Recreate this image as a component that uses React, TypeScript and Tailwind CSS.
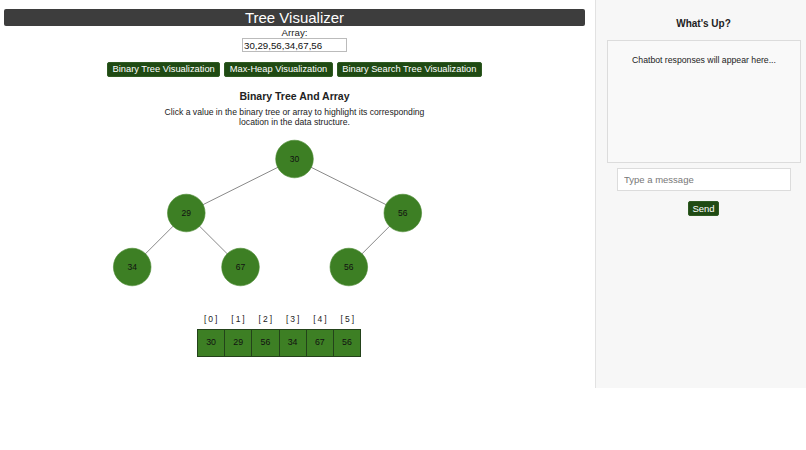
import React from "react";

const F = { fontFamily: '"Liberation Sans", Arial, Helvetica, sans-serif' };

type N = { x: number; y: number; v: string };

export default function App() {
  const arr = ["30", "29", "56", "34", "67", "56"];
  // coordinates relative to svg (svg starts at x=4, y=130)
  const nodes: N[] = [
    { x: 290.5, y: 28, v: "30" },
    { x: 182.3, y: 82, v: "29" },
    { x: 398.8, y: 82, v: "56" },
    { x: 128.2, y: 136, v: "34" },
    { x: 236.5, y: 136, v: "67" },
    { x: 344.8, y: 136, v: "56" },
  ];
  const edges: [number, number][] = [
    [0, 1],
    [0, 2],
    [1, 3],
    [1, 4],
    [2, 5],
  ];
  return (
    <div className="flex w-[806px] h-[450px] bg-white text-[#222]" style={F}>
      <div className="w-[595px] shrink-0 pl-[4px] pr-[10px]">
        <div className="mt-[9px] h-[17px] rounded-[2px] bg-[#3d3d3d] text-center text-[15px] leading-[17px] text-white">
          Tree Visualizer
        </div>
        <div className="mt-[1px] text-center text-[9.7px] leading-[11px]">Array:</div>
        <div className="flex justify-center">
          <input
            defaultValue="30,29,56,34,67,56"
            className="h-[14px] w-[105px] border border-[#bbb] bg-white px-[1px] text-[9.7px] leading-[12px] text-[#111] outline-none"
            style={F}
          />
        </div>
        <div className="mt-[10px] flex justify-center gap-[4px]">
          {["Binary Tree Visualization", "Max-Heap Visualization", "Binary Search Tree Visualization"].map((t) => (
            <button
              key={t}
              className="h-[15px] rounded-[2px] border border-[#2f5a22] bg-[#1f4a13] px-[4.5px] text-[9.3px] leading-[13px] text-white"
              style={F}
            >
              {t}
            </button>
          ))}
        </div>
        <div className="mt-[13px] text-center text-[10.5px] font-bold leading-[12px]">Binary Tree And Array</div>
        <div className="mt-[5px] text-center text-[8.65px] leading-[10px]">
          Click a value in the binary tree or array to highlight its corresponding
          <br />
          location in the data structure.
        </div>
        <svg width="581" height="160" className="mt-[4px] block">
          {edges.map(([a, b], i) => (
            <line
              key={i}
              x1={nodes[a].x}
              y1={nodes[a].y}
              x2={nodes[b].x}
              y2={nodes[b].y}
              stroke="#6b6b6b"
              strokeWidth="0.8"
            />
          ))}
          {nodes.map((n, i) => (
            <g key={i}>
              <circle cx={n.x} cy={n.y} r="18.8" fill="#3d7f24" stroke="#4a8a30" strokeWidth="0.6" />
              <text
                x={n.x}
                y={n.y + 3}
                textAnchor="middle"
                fontSize="8.5"
                fill="#111"
                style={F}
              >
                {n.v}
              </text>
            </g>
          ))}
        </svg>
        <div className="mt-[23px] flex pl-[193px]">
          <div className="flex w-[164px]">
            {arr.map((_, i) => (
              <div key={i} className="flex-1 pl-[2px] text-center text-[8.5px] leading-[10px] tracking-[2px]">
                [{i}]
              </div>
            ))}
          </div>
        </div>
        <div className="mt-[5px] flex pl-[193px]">
          <div className="flex h-[28px] w-[164px] border border-[#23421a]">
            {arr.map((v, i) => (
              <div
                key={i}
                className={
                  "flex flex-1 items-center justify-center bg-[#3d7f24] text-[8.8px] text-[#111] " +
                  (i > 0 ? "border-l border-[#23421a]" : "")
                }
              >
                {v}
              </div>
            ))}
          </div>
        </div>
      </div>
      <div className="h-[388px] flex-1 border-l border-[#e2e2e2] bg-[#f7f7f7]">
        <div className="pl-[5px] pt-[18px] text-center text-[10px] font-bold leading-[12px]">What's Up?</div>
        <div className="ml-[11px] mt-[10px] h-[123px] w-[194px] border border-[#dcdcdc] bg-[#f9f9f9] pt-[14px] text-center text-[8.7px] leading-[10px]">
          Chatbot responses will appear here...
        </div>
        <input
          placeholder="Type a message"
          className="ml-[21px] mt-[5px] block h-[23px] w-[174px] border border-[#dcdcdc] bg-white px-[6px] text-[9.5px] text-[#222] outline-none placeholder:text-[#777]"
          style={F}
        />
        <button
          className="ml-[92px] mt-[10px] block h-[15px] w-[31px] rounded-[2px] border border-[#2f5a22] bg-[#1f4a13] p-0 text-[9.5px] leading-[13px] text-white"
          style={F}
        >
          Send
        </button>
      </div>
    </div>
  );
}
